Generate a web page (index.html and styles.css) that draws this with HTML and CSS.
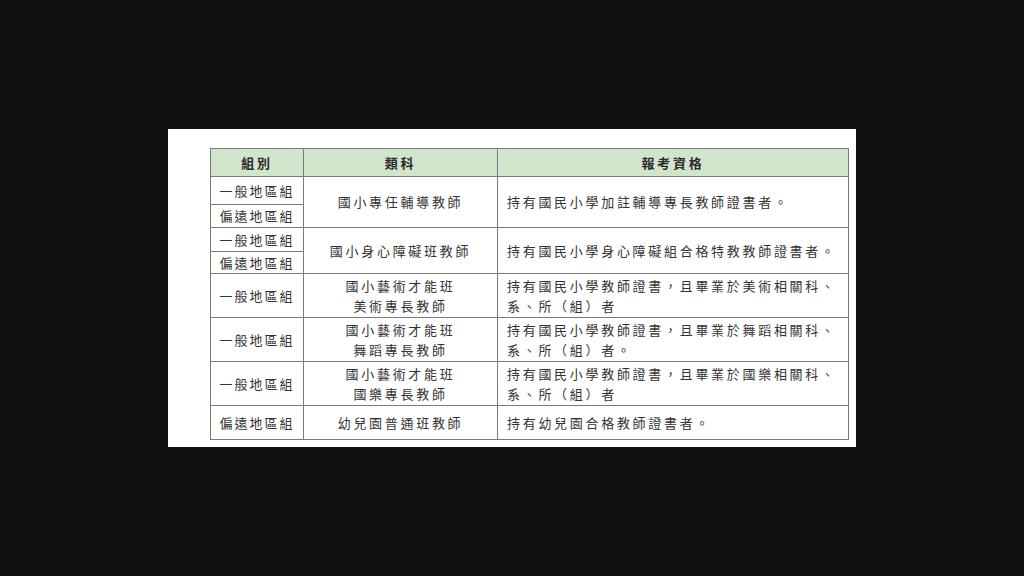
FILE: index.html
```html
<!DOCTYPE html>
<html lang="zh-Hant">
<head>
<meta charset="utf-8">
<link rel="stylesheet" href="styles.css">
</head>
<body>
<div class="stage">
  <div class="panel">
    <table class="qual">
      <colgroup>
        <col class="c1"><col class="c2"><col class="c3">
      </colgroup>
      <thead>
        <tr class="h-head">
          <th>組別</th><th>類科</th><th>報考資格</th>
        </tr>
      </thead>
      <tbody>
        <tr class="h-1a">
          <td class="grp">一般地區組</td>
          <td class="cat" rowspan="2">國小專任輔導教師</td>
          <td class="req" rowspan="2">持有國民小學加註輔導專長教師證書者。</td>
        </tr>
        <tr class="h-1b">
          <td class="grp">偏遠地區組</td>
        </tr>
        <tr class="h-2a">
          <td class="grp">一般地區組</td>
          <td class="cat" rowspan="2">國小身心障礙班教師</td>
          <td class="req" rowspan="2">持有國民小學身心障礙組合格特教教師證書者。</td>
        </tr>
        <tr class="h-2b">
          <td class="grp">偏遠地區組</td>
        </tr>
        <tr class="h-3">
          <td class="grp">一般地區組</td>
          <td class="cat two">國小藝術才能班<br>美術專長教師</td>
          <td class="req two">持有國民小學教師證書，且畢業於美術相關科、<br>系、所（組）者</td>
        </tr>
        <tr class="h-3">
          <td class="grp">一般地區組</td>
          <td class="cat two">國小藝術才能班<br>舞蹈專長教師</td>
          <td class="req two">持有國民小學教師證書，且畢業於舞蹈相關科、<br>系、所（組）者。</td>
        </tr>
        <tr class="h-3">
          <td class="grp">一般地區組</td>
          <td class="cat two">國小藝術才能班<br>國樂專長教師</td>
          <td class="req two">持有國民小學教師證書，且畢業於國樂相關科、<br>系、所（組）者</td>
        </tr>
        <tr class="h-6">
          <td class="grp">偏遠地區組</td>
          <td class="cat">幼兒園普通班教師</td>
          <td class="req">持有幼兒園合格教師證書者。</td>
        </tr>
      </tbody>
    </table>
  </div>
</div>
</body>
</html>
```

FILE: styles.css
```css
html, body {
  margin: 0;
  padding: 0;
  background: #111111;
}

.stage {
  width: 1024px;
  height: 576px;
  display: flex;
  align-items: center;
  justify-content: center;
}

.panel {
  background: #ffffff;
  width: 688px;
  height: 318px;
  box-sizing: border-box;
  padding: 19px 8px 7px 42px;
}

.qual {
  border-collapse: collapse;
  table-layout: fixed;
  width: 638px;
  font-family: "Noto Sans CJK TC", "Noto Sans CJK SC", sans-serif;
  font-size: 13px;
  color: #333333;
  letter-spacing: 2.7px;
}

.c1 { width: 93px; }
.c2 { width: 194px; }
.c3 { width: 351px; }

.qual th,
.qual td {
  border: 1px solid #7a7a7a;
  padding: 0;
  line-height: 20px;
  vertical-align: middle;
}

.qual th {
  background: #cfe6cb;
  font-weight: 700;
  color: #2a2a2a;
  text-align: center;
}

.grp, .cat { text-align: center; }

.grp { letter-spacing: 2px; }

.two { line-height: 21px; }

.req {
  text-align: left;
  padding-left: 9px !important;
}

.h-head { height: 28px; }
.h-1a { height: 28px; }
.h-1b { height: 23px; }
.h-2a { height: 24px; }
.h-2b { height: 22px; }
.h-3 { height: 44px; }
.h-6 { height: 34px; }
```
